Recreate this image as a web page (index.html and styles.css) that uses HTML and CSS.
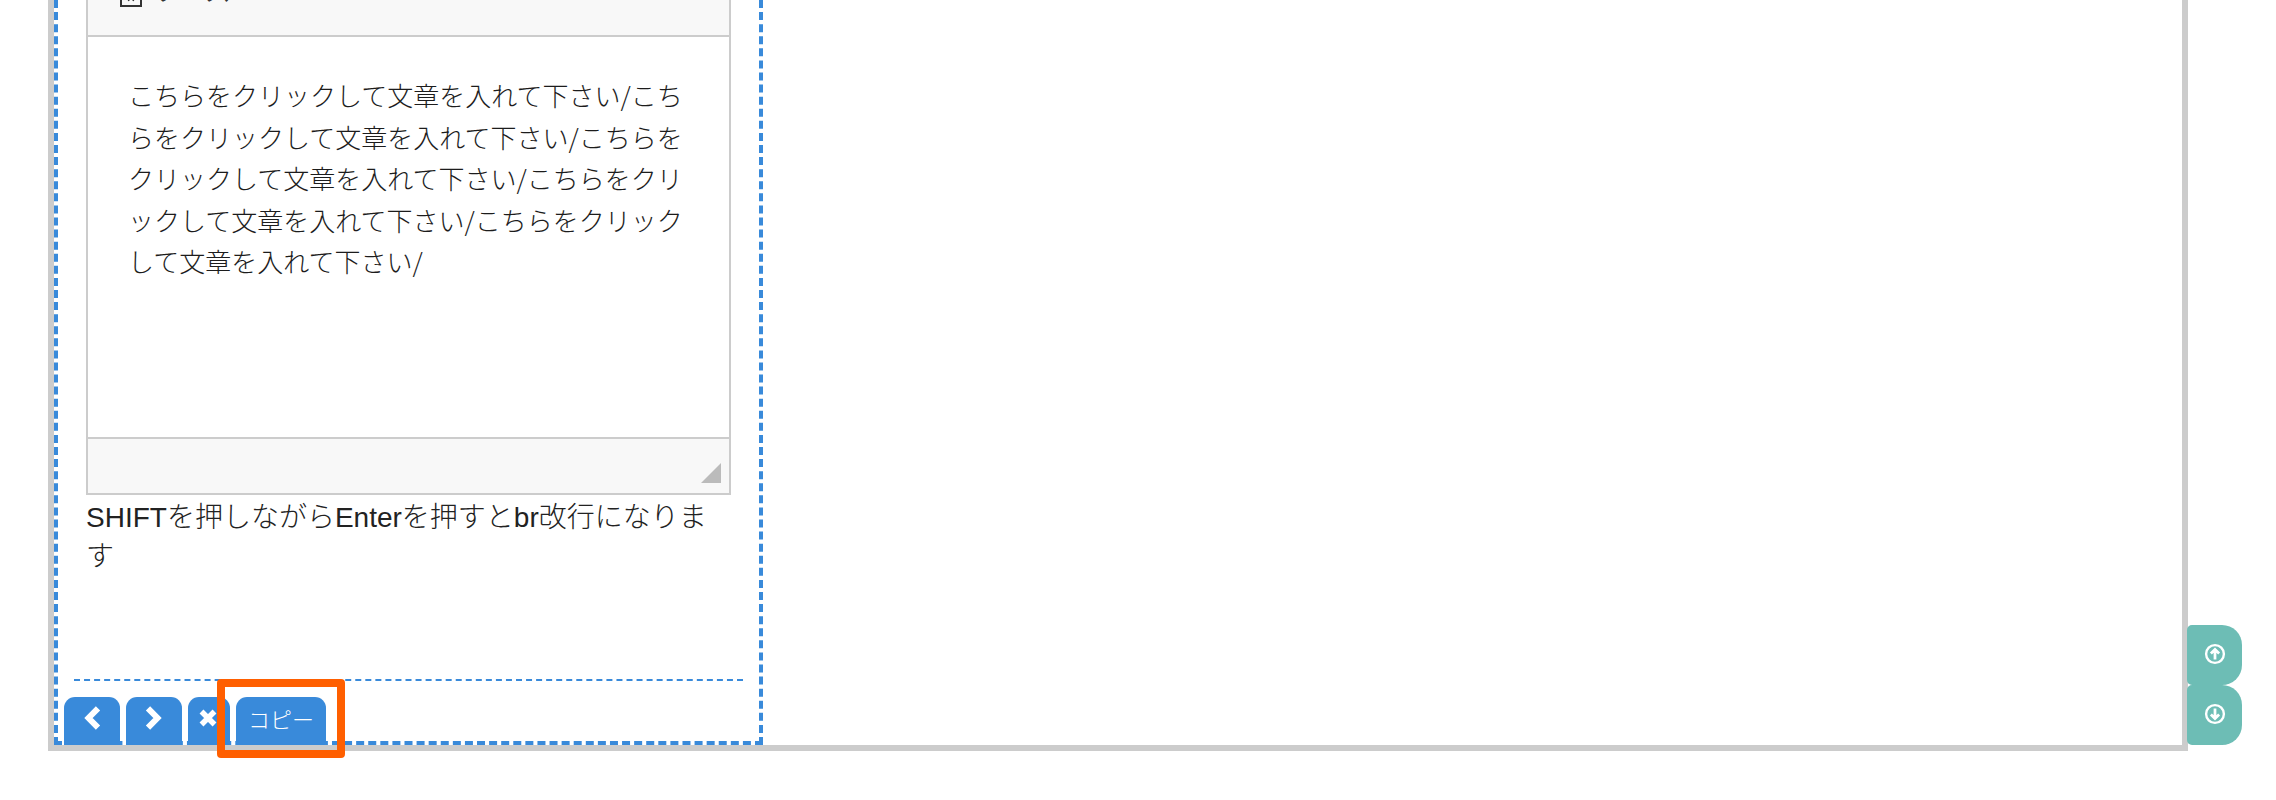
FILE: index.html
```html
<!DOCTYPE html>
<html lang="ja">
<head>
<meta charset="utf-8">
<title>Editor</title>
<link rel="stylesheet" href="styles.css">
</head>
<body>
<div class="stage">
  <div class="frame">
    <div class="block">
      <div class="editor">
        <div class="ed-head">
          <div class="ed-tools">
            <svg class="src-icon" viewBox="0 0 22 22"><path d="M1 1h20v20H1z" fill="none" stroke="#333" stroke-width="2"/><path d="M9 8l-2 4 2 4M13 8l2 4-2 4" fill="none" stroke="#333" stroke-width="1.5"/></svg>
            <span class="src-label">ソース</span>
          </div>
        </div>
        <div class="ed-body">こちらをクリックして文章を入れて下さい/こちらをクリックして文章を入れて下さい/こちらをクリックして文章を入れて下さい/こちらをクリックして文章を入れて下さい/こちらをクリックして文章を入れて下さい/</div>
        <div class="ed-foot"><span class="grip"></span></div>
      </div>
      <p class="note">SHIFTを押しながらEnterを押すとbr改行になります</p>
      <div class="rule"></div>
      <div class="tabs">
        <button class="tab tab-icon"><svg viewBox="0 0 20 24" class="glyph"><path d="M16 2.300L6.500 12l9.500 9.700" fill="none" stroke="#fff" stroke-width="6"/></svg></button>
        <button class="tab tab-icon"><svg viewBox="0 0 20 24" class="glyph"><path d="M4 2.300L13.500 12 4 21.700" fill="none" stroke="#fff" stroke-width="6"/></svg></button>
        <button class="tab tab-x"><svg viewBox="0 0 20 20" class="glyph-x"><path d="M3.500 3.500l13 13M16.500 3.500l-13 13" fill="none" stroke="#fff" stroke-width="5.500"/></svg></button>
        <div class="copy-mark"><button class="tab tab-copy">コピー</button></div>
      </div>
    </div>
  </div>
  <div class="side">
    <button class="side-btn"><svg viewBox="0 0 24 24" class="side-icon"><circle cx="12" cy="12" r="9.700" fill="none" stroke="#fff" stroke-width="2.600"/><path d="M12 18V7M7.500 11.500L12 7l4.500 4.500" fill="none" stroke="#fff" stroke-width="3"/></svg></button>
    <button class="side-btn"><svg viewBox="0 0 24 24" class="side-icon"><circle cx="12" cy="12" r="9.700" fill="none" stroke="#fff" stroke-width="2.600"/><path d="M12 6v11M7.500 12.500L12 17l4.500-4.500" fill="none" stroke="#fff" stroke-width="3"/></svg></button>
  </div>
</div>
</body>
</html>
```
FILE: styles.css
```css
*, *::before, *::after { box-sizing: border-box; }
html, body { margin: 0; padding: 0; background: #fff; }
body { height: 800px; overflow: hidden; font-family: "Liberation Sans", "Noto Sans CJK JP", sans-serif; color: #333; }
.stage { display: flex; align-items: flex-end; height: 751px; padding-left: 48px; }
.frame { width: 2140px; height: 751px; border: 6px solid #ccc; border-top: 0; background: #fff; }
.block { position: relative; width: 709px; height: 745px; border: 4px dashed #398ada; border-top: 0; padding-left: 28px; display: flex; flex-direction: column; }
.editor { width: 645px; border: 2px solid #ccc; border-top: 0; }
.ed-head { height: 37px; background: #f8f8f8; border-bottom: 2px solid #ccc; overflow: hidden; }
.ed-tools { display: flex; align-items: flex-start; gap: 12px; margin: -15px 0 0 32px; height: 22px; }
.src-icon { width: 22px; height: 22px; flex: none; }
.src-label { font-size: 26px; line-height: 22px; margin-top: -4px; }
.ed-body { height: 400px; padding: 37px 40px 0 40px; font-family: "Noto Sans CJK JP", "Liberation Sans", sans-serif; font-weight: 300; color: #1c1c1c; font-size: 26px; line-height: 41.6px; background: #fff; }
.ed-foot { height: 56px; background: #f8f8f8; border-top: 2px solid #ccc; position: relative; }
.grip { position: absolute; right: 8px; bottom: 10px; width: 20px; height: 20px; background: #bbb; clip-path: polygon(100% 0, 100% 100%, 0 100%); }
.note { margin: 3px 0 0; width: 645px; font-size: 28px; line-height: 39px; font-weight: 300; color: #222; }
.rule { position: absolute; left: 16px; top: 679px; width: 669px; border-top: 2px dashed #398ada; }
.tabs { position: absolute; left: 6px; bottom: -4px; display: flex; gap: 6px; align-items: flex-end; }
.tab { height: 48px; border: 0; margin: 0; padding: 0 0 6px; background: #398ada; color: #fff; border-radius: 11px 11px 0 0; display: flex; align-items: center; justify-content: center; font-family: inherit; }
.tab-icon { width: 56px; }
.tab-x { width: 42px; justify-content: flex-start; padding-left: 10px; }
.glyph { width: 20px; height: 24px; }
.glyph-x { width: 20px; height: 20px; }
.tab-copy { width: 90px; font-size: 22px; font-weight: 300; }
.copy-mark { position: relative; }
.copy-mark::after { content: ""; position: absolute; left: -19px; top: -18px; width: 128px; height: 79px; border: 8px solid #ff5f00; border-radius: 4px; }
.side { display: flex; flex-direction: column; margin: 0 0 6px -1px; }
.side-btn { width: 55px; height: 60px; padding: 0 0 2px; border: 0; background: #6dbdb5; border-radius: 5px 20px 20px 5px; display: flex; align-items: center; justify-content: center; }
.side-icon { width: 22px; height: 22px; }
```
